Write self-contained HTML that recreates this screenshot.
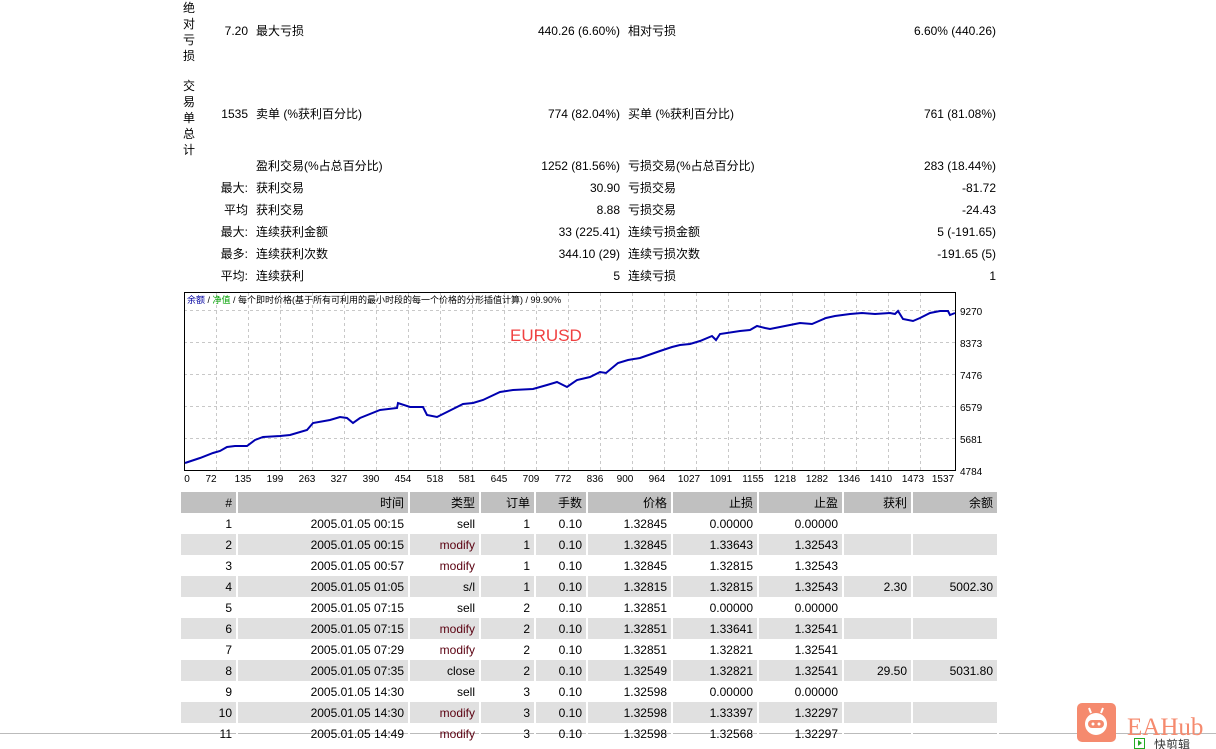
<!DOCTYPE html>
<html><head><meta charset="utf-8"><style>
body{margin:0;width:1216px;height:749px;background:#fff;position:relative;overflow:hidden;font-family:"Liberation Sans","Noto Sans CJK SC",sans-serif;font-size:12px;color:#000}
.a{position:absolute;white-space:nowrap;line-height:14px}
.r{text-align:right}
.v{position:absolute;left:183px;width:14px;line-height:16px;font-size:12px}
table{position:absolute;left:181px;top:492px;border-collapse:collapse;font-size:12px}
td{height:21px;padding:0 4px 0 0;text-align:right;border-right:2px solid #fff;box-sizing:border-box}
tr.h td{background:#c0c0c0;height:21px}
tr.g td{background:#e0e0e0}
.m{color:#5a0010}
</style></head><body>
<div class="v" style="top:0">绝<br>对<br>亏<br>损</div>
<div class="v" style="top:78px">交<br>易<br>单<br>总<br>计</div>

<div class="a r" style="right:968px;top:24px">7.20</div>
<div class="a" style="left:256px;top:24px">最大亏损</div>
<div class="a r" style="right:596px;top:24px">440.26 (6.60%)</div>
<div class="a" style="left:628px;top:24px">相对亏损</div>
<div class="a r" style="right:220px;top:24px">6.60% (440.26)</div>

<div class="a r" style="right:968px;top:107px">1535</div>
<div class="a" style="left:256px;top:107px">卖单 (%获利百分比)</div>
<div class="a r" style="right:596px;top:107px">774 (82.04%)</div>
<div class="a" style="left:628px;top:107px">买单 (%获利百分比)</div>
<div class="a r" style="right:220px;top:107px">761 (81.08%)</div>

<div class="a" style="left:256px;top:159px">盈利交易(%占总百分比)</div>
<div class="a r" style="right:596px;top:159px">1252 (81.56%)</div>
<div class="a" style="left:628px;top:159px">亏损交易(%占总百分比)</div>
<div class="a r" style="right:220px;top:159px">283 (18.44%)</div>

<div class="a r" style="right:968px;top:181px">最大:</div><div class="a" style="left:256px;top:181px">获利交易</div><div class="a r" style="right:596px;top:181px">30.90</div><div class="a" style="left:628px;top:181px">亏损交易</div><div class="a r" style="right:220px;top:181px">-81.72</div>
<div class="a r" style="right:968px;top:203px">平均</div><div class="a" style="left:256px;top:203px">获利交易</div><div class="a r" style="right:596px;top:203px">8.88</div><div class="a" style="left:628px;top:203px">亏损交易</div><div class="a r" style="right:220px;top:203px">-24.43</div>
<div class="a r" style="right:968px;top:225px">最大:</div><div class="a" style="left:256px;top:225px">连续获利金额</div><div class="a r" style="right:596px;top:225px">33 (225.41)</div><div class="a" style="left:628px;top:225px">连续亏损金额</div><div class="a r" style="right:220px;top:225px">5 (-191.65)</div>
<div class="a r" style="right:968px;top:247px">最多:</div><div class="a" style="left:256px;top:247px">连续获利次数</div><div class="a r" style="right:596px;top:247px">344.10 (29)</div><div class="a" style="left:628px;top:247px">连续亏损次数</div><div class="a r" style="right:220px;top:247px">-191.65 (5)</div>
<div class="a r" style="right:968px;top:269px">平均:</div><div class="a" style="left:256px;top:269px">连续获利</div><div class="a r" style="right:596px;top:269px">5</div><div class="a" style="left:628px;top:269px">连续亏损</div><div class="a r" style="right:220px;top:269px">1</div>

<svg style="position:absolute;left:0;top:0" width="1216" height="749">
<g stroke="#c8c8c8" stroke-dasharray="3,3" stroke-width="1">
<line x1="184" y1="310.5" x2="955" y2="310.5"/><line x1="184" y1="342.5" x2="955" y2="342.5"/><line x1="184" y1="374.5" x2="955" y2="374.5"/><line x1="184" y1="406.5" x2="955" y2="406.5"/><line x1="184" y1="438.5" x2="955" y2="438.5"/>
<path d="M216.5 293V471M248.5 293V471M280.5 293V471M312.5 293V471M344.5 293V471M376.5 293V471M408.5 293V471M440.5 293V471M472.5 293V471M504.5 293V471M536.5 293V471M568.5 293V471M600.5 293V471M632.5 293V471M664.5 293V471M696.5 293V471M728.5 293V471M760.5 293V471M792.5 293V471M824.5 293V471M856.5 293V471M888.5 293V471M920.5 293V471"/>
</g>
<rect x="184.5" y="292.5" width="771" height="178" fill="none" stroke="#000"/>
<polyline fill="none" stroke="#0000b0" stroke-width="2" points="185,463 200,458 213,453 220,451 227,447 235,446 247,446 255,440 263,437 280,436 290,435 307,430 313,423 330,420 340,417 347,418 353,423 360,418 380,410 397,408 398,403 410,407 423,407 427,415 437,417 447,412 463,404 473,403 483,400 500,392 513,390 533,389 547,385 557,382 567,387 577,380 590,377 600,372 606,373 618,363 628,360 640,358 660,351 672,347 680,345 690,344 700,341 712,336 716,340 720,334 740,331 750,330 757,326 765,328 770,329 780,327 790,325 800,323 812,324 826,318 835,316 850,314 862,313 875,314 890,313 895,314 898,311 903,319 913,321 920,318 930,313 940,311 948,311 950,315 955,313"/>
<g font-size="10" font-family="Liberation Sans,sans-serif" text-anchor="middle">
<text x="187" y="482">0</text><text x="211" y="482">72</text><text x="243" y="482">135</text><text x="275" y="482">199</text><text x="307" y="482">263</text><text x="339" y="482">327</text><text x="371" y="482">390</text><text x="403" y="482">454</text><text x="435" y="482">518</text><text x="467" y="482">581</text><text x="499" y="482">645</text><text x="531" y="482">709</text><text x="563" y="482">772</text><text x="595" y="482">836</text><text x="625" y="482">900</text><text x="657" y="482">964</text><text x="689" y="482">1027</text><text x="721" y="482">1091</text><text x="753" y="482">1155</text><text x="785" y="482">1218</text><text x="817" y="482">1282</text><text x="849" y="482">1346</text><text x="881" y="482">1410</text><text x="913" y="482">1473</text><text x="943" y="482">1537</text>
</g>
<g font-size="10" font-family="Liberation Sans,sans-serif">
<text x="960" y="315">9270</text><text x="960" y="347">8373</text><text x="960" y="379">7476</text><text x="960" y="411">6579</text><text x="960" y="443">5681</text><text x="960" y="475">4784</text>
</g>
<text x="187" y="303" font-size="9" font-family="Liberation Sans,Noto Sans CJK SC,sans-serif"><tspan fill="#0000a0">余额</tspan> / <tspan fill="#00a000">净值</tspan> / 每个即时价格(基于所有可利用的最小时段的每一个价格的分形插值计算) / 99.90%</text>
<text x="510" y="341" font-size="17" fill="#f04040" font-family="Liberation Sans,sans-serif">EURUSD</text>
<line x1="0" y1="733.5" x2="1216" y2="733.5" stroke="#bbb"/>
<rect x="1077" y="703" width="39" height="39" rx="5" fill="#f58a6e"/>
<circle cx="1096" cy="724" r="11" fill="#fff"/><rect x="1088" y="720" width="16" height="8" rx="4" fill="#f58a6e"/>
<circle cx="1093" cy="724" r="1.5" fill="#fff"/><circle cx="1099" cy="724" r="1.5" fill="#fff"/>
<line x1="1091" y1="713" x2="1089" y2="708" stroke="#fff" stroke-width="2"/><line x1="1101" y1="713" x2="1103" y2="708" stroke="#fff" stroke-width="2"/>
<text x="1127" y="735" font-size="25" fill="#f58a6e" font-family="Liberation Serif,serif">EAHub</text>
<rect x="1134.5" y="738.5" width="10" height="10" fill="none" stroke="#2a2"/><path d="M1138 740l4 3-4 3z" fill="#2a2"/>
<text x="1154" y="749" font-size="12" fill="#333" font-family="Liberation Sans,Noto Sans CJK SC,sans-serif">快剪辑</text>
</svg>

<table>
<colgroup><col style="width:56px"><col style="width:172px"><col style="width:71px"><col style="width:55px"><col style="width:52px"><col style="width:85px"><col style="width:86px"><col style="width:85px"><col style="width:69px"><col style="width:86px"></colgroup>
<tr class="h"><td>#</td><td>时间</td><td>类型</td><td>订单</td><td>手数</td><td>价格</td><td>止损</td><td>止盈</td><td>获利</td><td>余额</td></tr>
<tr><td>1</td><td>2005.01.05 00:15</td><td>sell</td><td>1</td><td>0.10</td><td>1.32845</td><td>0.00000</td><td>0.00000</td><td></td><td></td></tr>
<tr class="g"><td>2</td><td>2005.01.05 00:15</td><td class="m">modify</td><td>1</td><td>0.10</td><td>1.32845</td><td>1.33643</td><td>1.32543</td><td></td><td></td></tr>
<tr><td>3</td><td>2005.01.05 00:57</td><td class="m">modify</td><td>1</td><td>0.10</td><td>1.32845</td><td>1.32815</td><td>1.32543</td><td></td><td></td></tr>
<tr class="g"><td>4</td><td>2005.01.05 01:05</td><td>s/l</td><td>1</td><td>0.10</td><td>1.32815</td><td>1.32815</td><td>1.32543</td><td>2.30</td><td>5002.30</td></tr>
<tr><td>5</td><td>2005.01.05 07:15</td><td>sell</td><td>2</td><td>0.10</td><td>1.32851</td><td>0.00000</td><td>0.00000</td><td></td><td></td></tr>
<tr class="g"><td>6</td><td>2005.01.05 07:15</td><td class="m">modify</td><td>2</td><td>0.10</td><td>1.32851</td><td>1.33641</td><td>1.32541</td><td></td><td></td></tr>
<tr><td>7</td><td>2005.01.05 07:29</td><td class="m">modify</td><td>2</td><td>0.10</td><td>1.32851</td><td>1.32821</td><td>1.32541</td><td></td><td></td></tr>
<tr class="g"><td>8</td><td>2005.01.05 07:35</td><td>close</td><td>2</td><td>0.10</td><td>1.32549</td><td>1.32821</td><td>1.32541</td><td>29.50</td><td>5031.80</td></tr>
<tr><td>9</td><td>2005.01.05 14:30</td><td>sell</td><td>3</td><td>0.10</td><td>1.32598</td><td>0.00000</td><td>0.00000</td><td></td><td></td></tr>
<tr class="g"><td>10</td><td>2005.01.05 14:30</td><td class="m">modify</td><td>3</td><td>0.10</td><td>1.32598</td><td>1.33397</td><td>1.32297</td><td></td><td></td></tr>
<tr><td>11</td><td>2005.01.05 14:49</td><td class="m">modify</td><td>3</td><td>0.10</td><td>1.32598</td><td>1.32568</td><td>1.32297</td><td></td><td></td></tr>
</table>
</body></html>
